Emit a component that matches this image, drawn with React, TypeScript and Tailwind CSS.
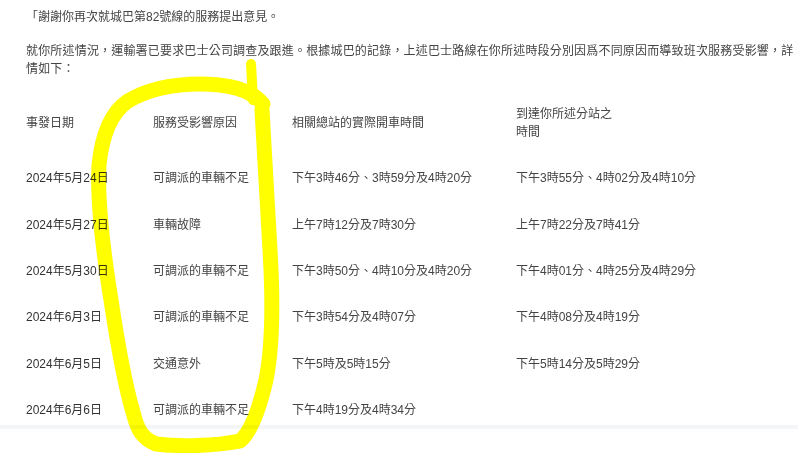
import React from "react";

type Row = {
  date: string;
  reason: string;
  depart: string;
  arrive: string;
};

const rows: Row[] = [
  {
    date: "2024年5月24日",
    reason: "可調派的車輛不足",
    depart: "下午3時46分、3時59分及4時20分",
    arrive: "下午3時55分、4時02分及4時10分",
  },
  {
    date: "2024年5月27日",
    reason: "車輛故障",
    depart: "上午7時12分及7時30分",
    arrive: "上午7時22分及7時41分",
  },
  {
    date: "2024年5月30日",
    reason: "可調派的車輛不足",
    depart: "下午3時50分、4時10分及4時20分",
    arrive: "下午4時01分、4時25分及4時29分",
  },
  {
    date: "2024年6月3日",
    reason: "可調派的車輛不足",
    depart: "下午3時54分及4時07分",
    arrive: "下午4時08分及4時19分",
  },
  {
    date: "2024年6月5日",
    reason: "交通意外",
    depart: "下午5時及5時15分",
    arrive: "下午5時14分及5時29分",
  },
  {
    date: "2024年6月6日",
    reason: "可調派的車輛不足",
    depart: "下午4時19分及4時34分",
    arrive: "",
  },
];

// hand-drawn highlighter loop over the "reason" column
const Highlighter: React.FC = () => (
  <svg
    className="absolute left-0 top-0 pointer-events-none mix-blend-multiply"
    width="798"
    height="453"
    viewBox="0 0 798 453"
    fill="none"
  >
    <path
      d="M251 64 L253 100"
      stroke="#ffff00"
      strokeWidth="10"
      strokeLinecap="round"
    />
    <path
      d="M263 104 C250 88 225 84 200 84 C175 84 150 88 128 101 C110 113 102 136 99 165 C97 200 103 250 111 300 C117 340 125 385 133 412 C137 428 141 438 156 444 C180 447 215 446 240 441 C251 432 259 410 266 380 C273 345 273 300 270 250 C267 200 264 150 262 110"
      stroke="#ffff00"
      strokeWidth="15"
      strokeLinecap="round"
      strokeLinejoin="round"
    />
  </svg>
);

export default function App() {
  return (
    <div
      className="relative w-[798px] h-[453px] bg-white overflow-hidden text-[12px] leading-[18px] text-[#444]"
      style={{ fontFamily: '"Liberation Sans", "Noto Sans CJK TC", sans-serif' }}
    >
      <div className="pl-[26px] pt-[8px]">
        <p>「謝謝你再次就城巴第82號線的服務提出意見。</p>
        <p className="mt-[15.5px] w-[770px] tracking-[0.18px]">
          就你所述情況，運輸署已要求巴士公司調查及跟進。根據城巴的記錄，上述巴士路線在你所述時段分別因爲不同原因而導致班次服務受影響，詳情如下：
        </p>
      </div>

      <div className="mt-[13.5px] pl-[26px] grid grid-cols-[127px_139px_224px_1fr]">
        <div className="py-[14px] flex items-center">事發日期</div>
        <div className="py-[14px] flex items-center">服務受影響原因</div>
        <div className="py-[14px] flex items-center">相關總站的實際開車時間</div>
        <div className="py-[14px]">
          到達你所述分站之
          <br />
          時間
        </div>

        {rows.map((row, i) => {
          const pad = i === rows.length - 1 ? "pt-[14.2px] pb-[6px]" : "py-[14.2px]";
          return (
            <React.Fragment key={row.date}>
              <div className={`${pad} text-[#333]`}>{row.date}</div>
              <div className={pad}>{row.reason}</div>
              <div className={pad}>{row.depart}</div>
              <div className={pad}>{row.arrive}</div>
            </React.Fragment>
          );
        })}
      </div>

      <div className="h-[4px] bg-[#f3f5f9]" />

      <Highlighter />
    </div>
  );
}
